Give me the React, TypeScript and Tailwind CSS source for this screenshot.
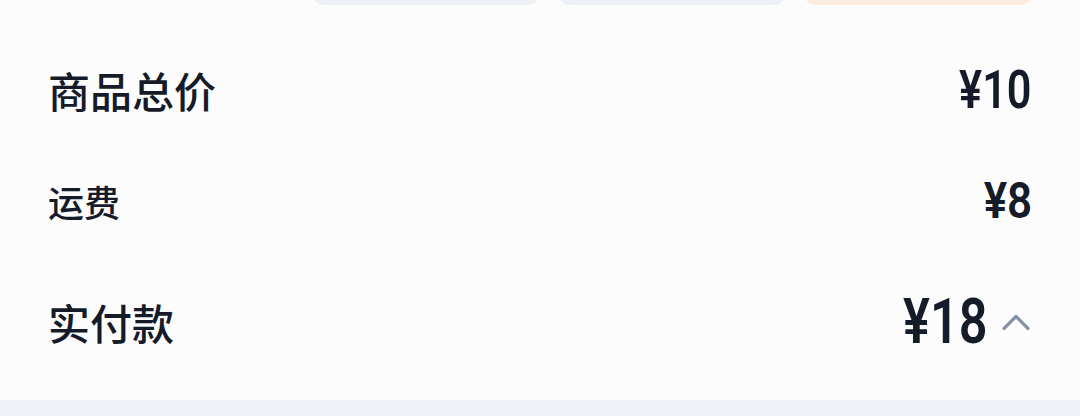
export default function App() {
  const cjk = "font-['Noto_Sans_CJK_SC','Noto_Sans',sans-serif]";
  const num = "font-['Roboto','Liberation_Sans',sans-serif] font-semibold inline-block origin-right";

  return (
    <div className="h-[416px] w-[1080px] bg-[#fcfcfd] flex flex-col overflow-hidden text-[#151b28]">
      {/* payment method pills, cut off at top */}
      <div className="flex justify-end gap-[18px] px-12">
        <div className="w-[228px] h-[40px] -mt-[35px] rounded-[12px] bg-[#edf1f5]" />
        <div className="w-[228px] h-[40px] -mt-[35px] rounded-[12px] bg-[#edf1f5]" />
        <div className="w-[228px] h-[40px] -mt-[35px] rounded-[12px] bg-[#fdebdf]" />
      </div>

      <div className="flex-1 flex flex-col px-12 pt-[30px]">
        <div className="h-[110px] flex items-center justify-between">
          <span className={`${cjk} text-[42px] font-medium leading-none`}>商品总价</span>
          <span className={`${num} scale-x-[0.8] text-[54px] leading-none`}>¥10</span>
        </div>
        <div className="h-[111px] flex items-center justify-between">
          <span className={`${cjk} text-[36px] font-medium leading-none`}>运费</span>
          <span className={`${num} scale-x-[0.88] text-[50px] leading-none`}>¥8</span>
        </div>
        <div className="h-[131px] flex items-center justify-between">
          <span className={`${cjk} text-[42px] font-medium leading-none`}>实付款</span>
          <div className="flex items-center gap-[14px] mr-[2px]">
            <span className={`${num} scale-x-[0.8] text-[63px] leading-none`}>¥18</span>
            <svg width="28" height="16" viewBox="0 0 28 16" fill="none">
              <path d="M2 14.5 L14 2.5 L26 14.5" stroke="#8792a4" strokeWidth="3.2" strokeLinecap="round" strokeLinejoin="round" />
            </svg>
          </div>
        </div>
      </div>

      <div className="h-4 bg-[#eef2f6]" />
    </div>
  );
}
